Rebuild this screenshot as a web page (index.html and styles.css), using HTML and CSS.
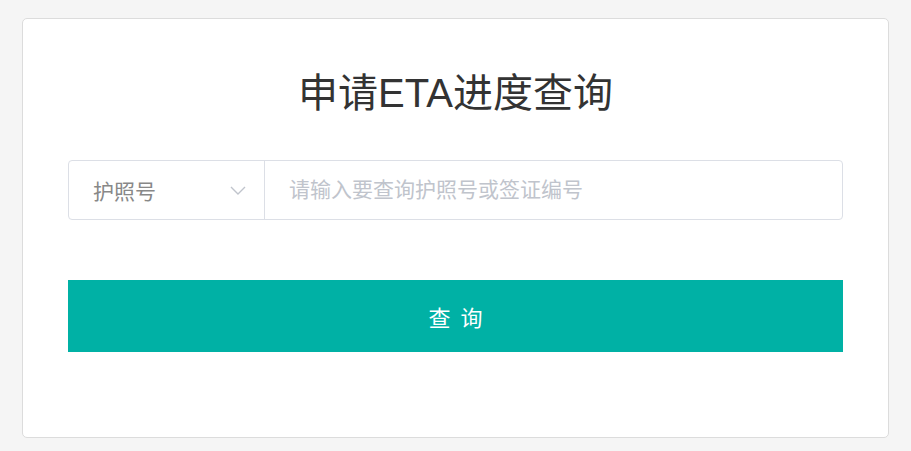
FILE: index.html
```
<html>
<head>
	<meta charset="utf-8">
	<title>申请ETA进度查询</title>
	<link rel="stylesheet" href="styles.css">
</head>
<body>

	<div class="card">
		<h1 class="title">申请ETA进度查询</h1>

		<div class="search">
			<div class="select">
				<span class="select-text">护照号</span>
				<svg class="chevron" width="16" height="9" viewBox="0 0 16 9">
					<polyline points="1,1 8,8 15,1" fill="none" stroke="#c0c4cc" stroke-width="1.4"/>
				</svg>
			</div>
			<input class="input" type="text" placeholder="请输入要查询护照号或签证编号">
		</div>

		<button type="button" class="button">查询</button>
	</div>

</body>
</html>
```

FILE: styles.css
```
body {
	background: #f5f5f5;
	margin: 0;
	padding: 18px 22px 0 22px;
	font-family: "Liberation Sans", "Noto Sans CJK SC", sans-serif;
}
.card {
	background: #fff;
	border: 1px solid #dcdcdc;
	border-radius: 5px;
	padding: 48px 45px 0 45px;
	box-sizing: border-box;
	height: 420px;
}
.title {
	margin: 0;
	font-size: 40px;
	line-height: 52px;
	font-weight: normal;
	color: #333;
	text-align: center;
}
.search {
	display: flex;
	margin-top: 41px;
	height: 60px;
	border: 1px solid #dcdfe6;
	border-radius: 4px;
	box-sizing: border-box;
}
.select {
	display: flex;
	align-items: center;
	justify-content: space-between;
	width: 196px;
	padding: 0 18px 0 24px;
	box-sizing: border-box;
	border-right: 1px solid #dcdfe6;
}
.select-text {
	font-size: 21px;
	color: #888;
}
.chevron {
	display: block;
}
.input {
	flex: 1;
	border: none;
	outline: none;
	background: transparent;
	padding: 0 0 0 24px;
	font-family: inherit;
	font-size: 21px;
	color: #606266;
}
.input::placeholder {
	color: #c0c4cc;
}
.button {
	display: block;
	width: 100%;
	height: 72px;
	margin-top: 60px;
	background: #00b1a5;
	color: #fff;
	border: none;
	border-radius: 0;
	font-family: inherit;
	font-size: 22px;
	letter-spacing: 10px;
	padding: 0 0 0 10px;
}
```
